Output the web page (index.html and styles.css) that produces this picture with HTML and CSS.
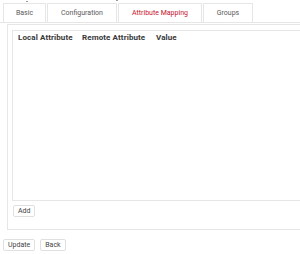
FILE: index.html
```html
<!DOCTYPE html>
<html>
<head>
<meta charset="utf-8">
<link rel="stylesheet" href="styles.css">
</head>
<body>
<div class="page">
  <div class="top-strip">
    <span class="mark mark-a"></span>
    <span class="mark mark-b"></span>
  </div>
  <div class="tabs">
    <div class="tab tab-basic">Basic</div>
    <div class="tab tab-config">Configuration</div>
    <div class="tab tab-attr active">Attribute Mapping</div>
    <div class="tab tab-groups">Groups</div>
  </div>
  <div class="panel">
    <div class="table-box">
      <div class="thead">
        <span class="th th-local">Local Attribute</span>
        <span class="th th-remote">Remote Attribute</span>
        <span class="th th-value">Value</span>
      </div>
    </div>
    <div class="add-row"><button class="btn">Add</button></div>
  </div>
  <div class="actions">
    <button class="btn">Update</button>
    <button class="btn">Back</button>
  </div>
</div>
</body>
</html>
```
FILE: styles.css
```css
html, body {
  margin: 0;
  padding: 0;
  background: #ffffff;
}
body {
  font-family: Roboto, "Liberation Sans", Arial, sans-serif;
  font-size: 7px;
  color: #555;
  width: 300px;
  height: 254px;
  overflow: hidden;
}
.top-strip {
  display: flex;
  height: 3px;
}
.mark {
  display: block;
  width: 2px;
  height: 1px;
  background: #999;
}
.mark-a { margin-left: 26px; margin-top: 1px; }
.mark-b { margin-left: 88px; margin-top: 0; }
.tabs {
  display: flex;
  padding-left: 3px;
  border-bottom: 1px solid #e6e6e6;
}
.tab {
  height: 19px;
  display: flex;
  align-items: center;
  justify-content: center;
  border: 1px solid #e6e6e6;
  border-bottom: none;
  margin-right: 1px;
  box-sizing: border-box;
  color: #5a5a5a;
}
.tab-basic { width: 43px; }
.tab-config { width: 70px; }
.tab-attr { width: 84px; }
.tab-groups { width: 50px; }
.tab.active { color: #c8102e; }
.panel {
  margin-left: 7px;
  margin-top: 1px;
  border: 1px solid #e6e6e6;
  border-right: none;
  padding: 5px 0 0 4px;
  height: 206px;
  box-sizing: border-box;
}
.table-box {
  border: 1px solid #e6e6e6;
  border-right: none;
  height: 171px;
  box-sizing: border-box;
  padding: 2px 0 0 5px;
}
.thead {
  display: flex;
  font-weight: bold;
  font-size: 8px;
  color: #383838;
  letter-spacing: 0.1px;
}
.th-local { width: 64px; }
.th-remote { width: 74px; }
.add-row {
  padding: 4px 0 0 1px;
}
.btn {
  font-family: inherit;
  font-size: 7px;
  color: #444;
  background: #fff;
  border: 1px solid #e0e0e0;
  border-radius: 2px;
  padding: 0 4px;
  height: 12px;
  line-height: 10px;
  margin: 0;
}
.actions {
  display: flex;
  gap: 5px;
  padding: 9px 0 0 3px;
}
```
